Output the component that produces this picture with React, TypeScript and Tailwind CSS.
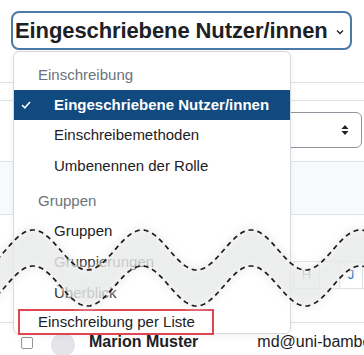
import React from 'react';

const font = { fontFamily: '"Liberation Sans", Arial, sans-serif' };

// torn-paper strip drawn across the screenshot
const Wave: React.FC = () => {
  const top: [number, number][] = [];
  for (let x = -10; x <= 374; x += 2) {
    top.push([x, 250 - 20 * Math.cos((2 * Math.PI * (x - 33)) / 109)]);
  }
  const bottom = top.map(([x, y]) => [x, y + 36] as [number, number]);
  const line = (p: [number, number][]) => p.map(([x, y], i) => `${i ? 'L' : 'M'}${x.toFixed(1)} ${y.toFixed(1)}`).join(' ');
  const area = line(top) + ' ' + [...bottom].reverse().map(([x, y]) => `L${x.toFixed(1)} ${y.toFixed(1)}`).join(' ') + ' Z';

  return (
    <svg className="absolute inset-0 pointer-events-none" width="364" height="355" viewBox="0 0 364 355">
      <defs>
        <filter id="soft" x="-10%" y="-50%" width="120%" height="200%">
          <feGaussianBlur stdDeviation="4" />
        </filter>
      </defs>
      <path d={area} fill="#e9eaea" stroke="#e9eaea" strokeWidth="4" opacity="0.85" filter="url(#soft)" />
      <path d={line(top)} fill="none" stroke="#1a1a1a" strokeWidth="1.7" strokeDasharray="5 4" />
      <path d={line(bottom)} fill="none" stroke="#1a1a1a" strokeWidth="1.7" strokeDasharray="5 4" />
    </svg>
  );
};

const MenuItem: React.FC<{ label: string }> = ({ label }) => (
  <div className="h-[31px] flex items-center pl-[40px] text-[15px] text-[#1d2125]">{label}</div>
);

const MenuHeader: React.FC<{ label: string; h: string }> = ({ label, h }) => (
  <div className={`${h} flex items-center pl-[24px] text-[15px] text-[#6a737b]`}>{label}</div>
);

const App: React.FC = () => {
  return (
    <div className="relative w-[364px] h-[355px] overflow-hidden bg-white" style={font}>
      {/* page select */}
      <div className="ml-[11px] mt-[11px] w-[341px] h-[39px] border-[2.5px] border-[#4a7aa8] rounded-lg flex items-center pl-[2px] pr-[6px]">
        <span className="text-[22px] font-bold text-[#1d2125] tracking-[-0.1px]">Eingeschriebene Nutzer/innen</span>
        <svg className="ml-auto mt-[2px]" width="8" height="6" viewBox="0 0 8 6">
          <polyline points="1,1.5 4,4.5 7,1.5" fill="none" stroke="#1d2125" strokeWidth="1.3" />
        </svg>
      </div>

      {/* page content behind the menu */}
      <div className="mt-[32px] border-t border-[#dee2e6] h-[18px]" />
      <div className="border-t border-[#dee2e6]" />
      <div className="mt-[11px] ml-[200px] w-[162px] h-[36px] border border-[#8f959e] rounded-md flex items-center justify-end pr-[12px]">
        <svg width="8" height="12" viewBox="0 0 8 12">
          <polygon points="4,1 7.5,5 0.5,5" fill="#1d2125" />
          <polygon points="0.5,7 7.5,7 4,11" fill="#1d2125" />
        </svg>
      </div>
      <div className="mt-[13px] h-[54px] bg-[#f8f9fa] border-y border-[#dee2e6]" />
      <div className="mt-[46px] ml-[293px] h-[28px] flex border-y border-[#dee2e6] text-[13px]">
        <div className="w-[27px] border-x border-[#dee2e6] flex items-center justify-center text-[#6a737b]">H</div>
        <div className="w-[20px] border-r border-[#dee2e6]" />
        <div className="w-[23px] border-r border-[#dee2e6] flex items-center justify-center text-[#0f6cbf]">J</div>
      </div>
      <div className="mt-[33px] border-t border-[#dee2e6] h-[32px] flex items-start pt-[10px] text-[16px] leading-[18px] text-[#1d2125] whitespace-nowrap">
        <div className="shrink-0 ml-[21px] mt-[4px] w-[12px] h-[12px] border border-[#8f959e] rounded-[2px]" />
        <div className="shrink-0 ml-[18px] w-[24px] h-[24px] rounded-full bg-[#e3e5e8]" />
        <span className="shrink-0 ml-[14px] font-bold">Marion Muster</span>
        <span className="shrink-0 ml-[59px]">md@uni-bamberg.de</span>
      </div>

      {/* dropdown menu */}
      <div className="absolute left-[13px] top-[51px] w-[278px] h-[283px] bg-white border border-[#d6d9dc] rounded-md shadow-[0_2px_6px_rgba(0,0,0,0.06)] pt-[9px]">
        <MenuHeader label="Einschreibung" h="h-[29px]" />
        <div className="h-[30px] bg-[#114a7f] flex items-center text-white">
          <svg className="ml-[7px]" width="10" height="8" viewBox="0 0 10 8">
            <polyline points="1,4 3.8,6.8 9,1" fill="none" stroke="#fff" strokeWidth="1.5" />
          </svg>
          <span className="ml-[23px] text-[15px] font-bold">Eingeschriebene Nutzer/innen</span>
        </div>
        <MenuItem label="Einschreibemethoden" />
        <MenuItem label="Umbenennen der Rolle" />
        <div className="h-[4px]" />
        <MenuHeader label="Gruppen" h="h-[30px]" />
        <MenuItem label="Gruppen" />
        <MenuItem label="Gruppierungen" />
        <MenuItem label="Überblick" />
        <div className="ml-[4px] w-[196px] h-[26px] border-[2.5px] border-[#df4652] flex items-center pl-[18px] text-[15px] text-[#1d2125]">
          Einschreibung per Liste
        </div>
      </div>

      <Wave />
    </div>
  );
};

export default App;
